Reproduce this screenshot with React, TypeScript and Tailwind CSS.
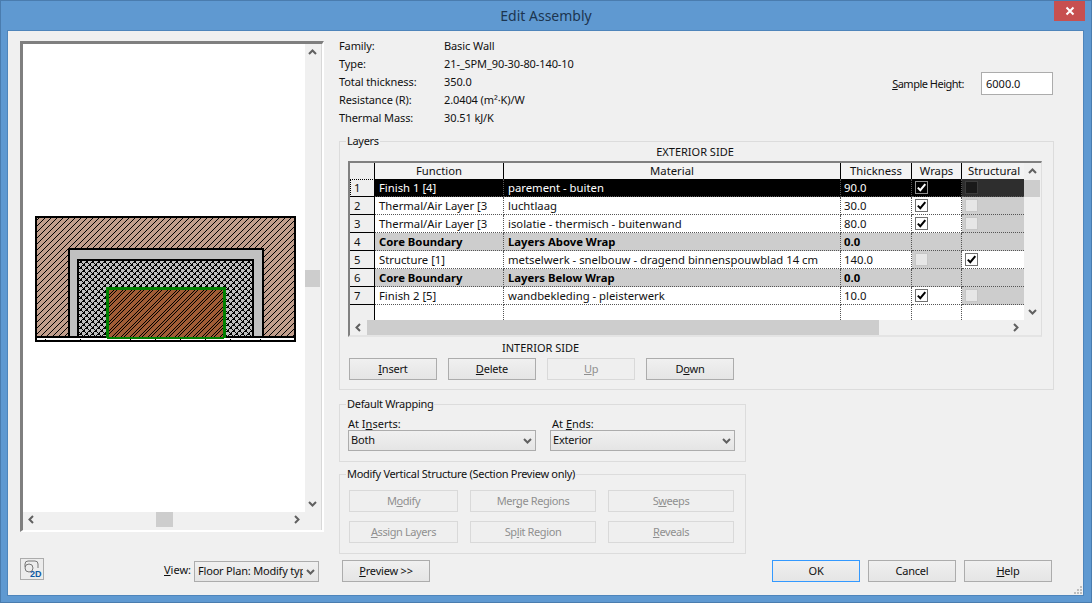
const Chevron = ({ dir, className = "" }: { dir: "up" | "down" | "left" | "right"; className?: string }) => {
  const d = {
    up: "M1 6 L4.5 2.5 L8 6",
    down: "M1 3 L4.5 6.5 L8 3",
    left: "M6 1 L2.5 4.5 L6 8",
    right: "M3 1 L6.5 4.5 L3 8",
  }[dir];
  return (
    <svg width="9" height="9" viewBox="0 0 9 9" className={className}>
      <path d={d} fill="none" stroke="#606060" strokeWidth="2" />
    </svg>
  );
};

const Check = () => (
  <svg width="11" height="11" viewBox="0 0 11 11">
    <path d="M1.8 5.6 L4.3 8.2 L9.3 2.2" fill="none" stroke="#000" strokeWidth="2" />
  </svg>
);

const CheckWhite = () => (
  <svg width="11" height="11" viewBox="0 0 11 11">
    <path d="M1.8 5.6 L4.3 8.2 L9.3 2.2" fill="none" stroke="#fff" strokeWidth="2" />
  </svg>
);

const Button = ({
  children,
  disabled,
  focus,
  className = "",
}: {
  children: React.ReactNode;
  disabled?: boolean;
  focus?: boolean;
  className?: string;
}) => (
  <div
    className={`h-[22px] flex items-center justify-center border text-[11px] ${
      disabled
        ? "border-[#d9d9d9] bg-[#efefef] text-[#8f8f8f] tracking-[-0.4px]"
        : focus
          ? "border-[#3399ff] bg-gradient-to-b from-[#f0f0f0] to-[#e5e5e5] text-[#111] tracking-[-0.2px]"
          : "border-[#acacac] bg-gradient-to-b from-[#f0f0f0] to-[#e5e5e5] text-[#111] tracking-[-0.2px]"
    } ${className}`}
  >
    <span>{children}</span>
  </div>
);

const Select = ({ value, className = "" }: { value: string; className?: string }) => (
  <div
    className={`h-[21px] flex items-center border border-[#acacac] bg-gradient-to-b from-[#f0f0f0] to-[#e5e5e5] pr-[3px] text-[11px] text-[#111] ${className}`}
  >
    <span className="flex-1 overflow-hidden whitespace-nowrap tracking-[-0.2px]">{value}</span>
    <Chevron dir="down" className="ml-[3px] shrink-0" />
  </div>
);

const Group = ({
  title,
  children,
  className = "",
}: {
  title: string;
  children: React.ReactNode;
  className?: string;
}) => (
  <fieldset className={`border border-[#dcdcdc] ${className}`}>
    <legend className="ml-[6px] px-[1px] text-[11px] leading-[12px] tracking-[-0.3px] text-[#111]">{title}</legend>
    {children}
  </fieldset>
);

const info = [
  ["Family:", "Basic Wall"],
  ["Type:", "21-_SPM_90-30-80-140-10"],
  ["Total thickness:", "350.0"],
  ["Resistance (R):", "2.0404 (m²·K)/W"],
  ["Thermal Mass:", "30.51 kJ/K"],
];

type Box = "on" | "off" | "none" | "onDark" | "offDark";

const rows: {
  n: string;
  fn: string;
  mat: string;
  th: string;
  wraps: Box;
  struct: Box;
  kind: "sel" | "core" | "plain";
}[] = [
  { n: "1", fn: "Finish 1 [4]", mat: "parement - buiten", th: "90.0", wraps: "onDark", struct: "offDark", kind: "sel" },
  { n: "2", fn: "Thermal/Air Layer [3", mat: "luchtlaag", th: "30.0", wraps: "on", struct: "off", kind: "plain" },
  { n: "3", fn: "Thermal/Air Layer [3", mat: "isolatie - thermisch - buitenwand", th: "80.0", wraps: "on", struct: "off", kind: "plain" },
  { n: "4", fn: "Core Boundary", mat: "Layers Above Wrap", th: "0.0", wraps: "none", struct: "none", kind: "core" },
  { n: "5", fn: "Structure [1]", mat: "metselwerk - snelbouw - dragend binnenspouwblad 14 cm", th: "140.0", wraps: "off", struct: "on", kind: "plain" },
  { n: "6", fn: "Core Boundary", mat: "Layers Below Wrap", th: "0.0", wraps: "none", struct: "none", kind: "core" },
  { n: "7", fn: "Finish 2 [5]", mat: "wandbekleding - pleisterwerk", th: "10.0", wraps: "on", struct: "off", kind: "plain" },
];

const CheckCell = ({ box, last }: { box: Box; last?: boolean }) => {
  const bg =
    box === "onDark"
      ? "bg-black"
      : box === "offDark"
        ? "bg-[#2e2e2e]"
        : box === "on"
          ? "bg-white"
          : "bg-[#cdcdcd]";
  return (
    <div
      className={`h-[18px] flex items-center pl-[3px] border-b border-dotted border-b-[#555] ${
        last ? "" : "border-r border-r-[#555]"
      } ${bg}`}
    >
      {box === "on" && (
        <div className="w-[13px] h-[13px] border border-[#707070] bg-white flex items-center justify-center">
          <Check />
        </div>
      )}
      {box === "onDark" && (
        <div className="w-[13px] h-[13px] border border-[#8f8f8f] bg-black flex items-center justify-center">
          <CheckWhite />
        </div>
      )}
      {box === "off" && <div className="w-[13px] h-[13px] border border-[#c6c6c6] bg-[#e6e6e6]" />}
      {box === "offDark" && <div className="w-[13px] h-[13px] border border-[#3c3c3c] bg-[#191919]" />}
    </div>
  );
};

const LayerTable = () => (
  <div className="w-[694px] h-[176px] border-l-2 border-t-2 border-l-[#808080] border-t-[#808080] border-r border-b-2 border-r-[#dedede] border-b-[#e4e4e4] grid grid-cols-[674px_17px] grid-rows-[157px_15px] bg-[#f0f0f0] text-[11.3px] text-[#111]">
    <div className="overflow-hidden bg-white">
      <div className="grid grid-cols-[25px_129px_337px_71px_50px_62px] h-[16px] leading-[16px] bg-[#f3f3f3] text-center">
        <div className="border-r border-black bg-[#efefef]" />
        <div className="border-r border-black">Function</div>
        <div className="border-r border-black">Material</div>
        <div className="border-r border-black">Thickness</div>
        <div className="border-r border-black">Wraps</div>
        <div className="overflow-hidden whitespace-nowrap text-left pl-[6px]">Structural</div>
      </div>
      {rows.map((r) => {
        const tone =
          r.kind === "sel"
            ? "bg-black text-white"
            : r.kind === "core"
              ? "bg-[#cdcdcd] font-bold text-black"
              : "bg-white text-[#111]";
        const cell = "h-[18px] leading-[17px] border-r border-b border-dotted border-[#555] whitespace-nowrap overflow-hidden";
        return (
          <div key={r.n} className="grid grid-cols-[25px_129px_337px_71px_50px_62px]">
            <div
              className={`h-[18px] leading-[17px] pl-[4px] bg-[#efefef] border-r border-b border-black ${
                r.kind === "sel" ? "outline-1 -outline-offset-1 outline-dotted outline-black" : ""
              }`}
            >
              {r.n}
            </div>
            <div className={`${cell} ${tone} pl-[4px]`}>{r.fn}</div>
            <div className={`${cell} ${tone} pl-[4px]`}>{r.mat}</div>
            <div className={`${cell} ${tone} pl-[3px]`}>{r.th}</div>
            <CheckCell box={r.wraps} />
            <CheckCell box={r.struct} last />
          </div>
        );
      })}
      <div className="grid grid-cols-[25px_129px_337px_71px_50px_62px] h-[15px]">
        <div className="bg-[#efefef] border-r border-black" />
        <div className="border-r border-dotted border-[#555]" />
        <div className="border-r border-dotted border-[#555]" />
        <div className="border-r border-dotted border-[#555]" />
        <div className="border-r border-dotted border-[#555]" />
        <div />
      </div>
    </div>
    <div className="flex flex-col items-center">
      <div className="h-[17px] flex items-center justify-center">
        <Chevron dir="up" />
      </div>
      <div className="w-[16px] h-[17px] bg-[#cdcdcd] self-start" />
      <div className="flex-1" />
      <div className="h-[17px] flex items-center justify-center">
        <Chevron dir="down" />
      </div>
    </div>
    <div className="flex items-center">
      <div className="w-[17px] flex justify-center">
        <Chevron dir="left" />
      </div>
      <div className="w-[512px] h-[15px] bg-[#cdcdcd]" />
      <div className="flex-1" />
      <div className="w-[17px] flex justify-center">
        <Chevron dir="right" />
      </div>
    </div>
    <div />
  </div>
);

// one pixel per step so the hatch stays a thin staircase
const px = (pts: number[][]) => pts.map(([x, y]) => `M${x} ${y}h1v1h-1z`).join(" ");

const WallDrawing = () => (
  <svg width="262" height="127" viewBox="0 0 262 127" shapeRendering="crispEdges" className="block">
    <defs>
      <pattern id="hatch" width="6" height="6" patternUnits="userSpaceOnUse">
        <rect width="6" height="6" fill="#c19e8c" />
        <path d={px([[0, 5], [1, 4], [2, 3], [3, 2], [4, 1], [5, 0]])} fill="#000" />
      </pattern>
      <pattern id="brick" width="9" height="9" patternUnits="userSpaceOnUse">
        <rect width="9" height="9" fill="#a05c36" />
        <path
          d={px([[0, 8], [1, 7], [2, 6], [3, 5], [4, 4], [5, 3], [6, 2], [7, 1], [8, 0], [0, 2], [1, 1], [2, 0], [3, 8], [4, 7], [5, 6], [6, 5], [7, 4], [8, 3]])}
          fill="#000"
        />
      </pattern>
      <pattern id="cross" width="6" height="6" patternUnits="userSpaceOnUse">
        <rect width="6" height="6" fill="#c0c0c0" />
        <path d={px([[0, 0], [1, 0], [0, 1], [1, 1], [3, 3], [4, 3], [3, 4], [4, 4], [2, 2], [5, 5], [2, 4], [4, 2], [1, 5], [5, 1]])} fill="#000" />
      </pattern>
    </defs>
    <rect x="1" y="1" width="259" height="120" fill="url(#hatch)" stroke="#000" strokeWidth="2" />
    <path d="M34 121 V33 H228 V121 Z" fill="#c0c0c0" stroke="#000" strokeWidth="2" />
    <path d="M43 121 V44 H218 V121 Z" fill="url(#cross)" stroke="#000" strokeWidth="2" />
    <rect x="72" y="72" width="117" height="50" fill="url(#brick)" stroke="#008000" strokeWidth="3" />
    <rect x="2" y="122" width="258" height="2" fill="#fff" />
    <rect x="72" y="121" width="117" height="2" fill="#008000" />
    <rect x="0" y="120" width="2" height="6" fill="#000" />
    <rect x="259" y="120" width="2" height="6" fill="#000" />
    <rect x="0" y="124" width="261" height="2" fill="#000" />
    <path d="M10 123 V124 M45 123 V124 M95 123 V124 M120 123 V124 M145 123 V124 M170 123 V124 M195 123 V124 M225 123 V124" stroke="#000" />
  </svg>
);

const App = () => {
  return (
    <div className="w-[1092px] h-[603px] bg-[#5f99d1] border border-[#4a7cae] font-['Noto_Sans',sans-serif] overflow-hidden">
      {/* title bar */}
      <div className="h-[29px] grid grid-cols-[1fr_auto_1fr] items-start">
        <div />
        <div className="pt-[5px] text-[14px] leading-[20px] text-[#1c3550]">Edit Assembly</div>
        <div className="flex justify-end pr-[6px]">
          <div className="w-[31px] h-[20px] bg-[#c75050] flex items-center justify-center">
            <svg width="10" height="10" viewBox="0 0 10 10">
              <path d="M1.5 1.5 L8.5 8.5 M8.5 1.5 L1.5 8.5" stroke="#fff" strokeWidth="2" />
            </svg>
          </div>
        </div>
      </div>

      {/* dialog */}
      <div className="relative ml-[6px] w-[1077px] h-[566px] border border-[#4e85bb] bg-[#f0f0f0] flex text-[11px] text-[#111]">
        {/* left column */}
        <div className="w-[304px] ml-[12px] pt-[10px] flex flex-col">
          <div className="h-[491px] border-l-[3px] border-t-[3px] border-l-[#7f7f7f] border-t-[#7f7f7f] border-r-2 border-b-2 border-r-white border-b-white grid grid-cols-[282px_1fr] grid-rows-[468px_1fr]">
            <div className="bg-white pl-[12px] pt-[172px]">
              <WallDrawing />
            </div>
            <div className="flex flex-col justify-between items-start border-r border-[#d8d8d8]">
              <div className="w-[15px] h-[17px] flex items-center justify-center">
                <Chevron dir="up" />
              </div>
              <div className="w-[15px] h-[17px] bg-[#cdcdcd]" />
              <div className="w-[15px] h-[17px] flex items-center justify-center">
                <Chevron dir="down" />
              </div>
            </div>
            <div className="h-[15px] flex justify-between items-center">
              <div className="w-[17px] flex justify-center">
                <Chevron dir="left" />
              </div>
              <div className="w-[17px] h-[15px] bg-[#cdcdcd]" />
              <div className="w-[17px] flex justify-center">
                <Chevron dir="right" />
              </div>
            </div>
            <div className="border-r border-[#d8d8d8]" />
          </div>
          <div className="mt-[26px] flex items-start">
            <div className="w-[24px] h-[22px] border border-[#acacac] bg-[#ececec]">
              <svg width="22" height="20" viewBox="0 0 22 20" className="block">
                <path d="M4 8 V5 Q4 2 7 2 H14 Q17 2 17 5 V9" fill="none" stroke="#777" strokeWidth="1" />
                <circle cx="8" cy="9" r="4" fill="none" stroke="#777" strokeWidth="1" />
                <text x="9" y="18" fontSize="9" fontWeight="700" fill="#0f5aa5" fontFamily="'Liberation Sans',sans-serif">
                  2D
                </text>
              </svg>
            </div>
            <span className="ml-[120px] mt-[5px] leading-[13px]">
              <u>V</u>iew:
            </span>
            <Select value="Floor Plan: Modify type" className="ml-[3px] mt-[3px] w-[125px] pl-[3px]" />
          </div>
        </div>

        {/* right column */}
        <div className="ml-[15px] w-[715px] flex flex-col">
          <div className="pt-[6px] flex justify-between h-[96px]">
            <div className="tracking-[-0.1px]">
              {info.map(([k, v]) => (
                <div key={k} className="h-[18px] leading-[18px] flex">
                  <span className="w-[105px]">{k}</span>
                  <span>{v}</span>
                </div>
              ))}
            </div>
            <div className="flex items-start mt-[35px] mr-[1px]">
              <span className="mt-[5px] mr-[17px] leading-[13px] tracking-[-0.5px]">
                <u>S</u>ample Height:
              </span>
              <div className="w-[72px] h-[23px] border border-[#acacac] bg-white pl-[4px] leading-[21px]">6000.0</div>
            </div>
          </div>

          <Group title="Layers" className="mt-[8px] h-[255px]">
            <div className="pl-[8px] pr-[11px] -mt-[2px]">
              <div className="h-[16px] leading-[13px] text-center">EXTERIOR SIDE</div>
              <LayerTable />
              <div className="mt-[4px] ml-[154px] h-[13px] leading-[13px] whitespace-nowrap">INTERIOR SIDE</div>
              <div className="mt-[4px] ml-[1px] flex gap-[11px]">
                <Button className="w-[88px]">
                  <u>I</u>nsert
                </Button>
                <Button className="w-[88px]">
                  <u>D</u>elete
                </Button>
                <Button disabled className="w-[88px]">
                  <u>U</u>p
                </Button>
                <Button className="w-[88px]">
                  D<u>o</u>wn
                </Button>
              </div>
            </div>
          </Group>

          <Group title="Default Wrapping" className="mt-[8px] w-[407px] h-[64px]">
            <div className="mt-[7px] pl-[8px] flex">
              <div className="w-[188px] mr-[14px]">
                <div className="h-[13px] leading-[13px]">
                  At I<u>n</u>serts:
                </div>
                <Select value="Both" className="pl-[2px]" />
              </div>
              <div className="w-[185px]">
                <div className="h-[13px] leading-[13px] pl-[2px]">
                  At <u>E</u>nds:
                </div>
                <Select value="Exterior" className="pl-[2px]" />
              </div>
            </div>
          </Group>

          <Group title="Modify Vertical Structure (Section Preview only)" className="mt-[6px] w-[407px] h-[86px]">
            <div className="mt-[10px] pl-[9px] grid grid-cols-[109px_126px_126px] gap-x-[12px] gap-y-[9px]">
              <Button disabled>
                M<u>o</u>dify
              </Button>
              <Button disabled>
                Mer<u>g</u>e Regions
              </Button>
              <Button disabled>
                S<u>w</u>eeps
              </Button>
              <Button disabled>
                <u>A</u>ssign Layers
              </Button>
              <Button disabled>
                Sp<u>l</u>it Region
              </Button>
              <Button disabled>
                <u>R</u>eveals
              </Button>
            </div>
          </Group>

          <div className="mt-[6px] ml-[3px] flex">
            <Button className="w-[88px]">
              <u>P</u>review &gt;&gt;
            </Button>
            <div className="ml-auto mr-[2px] flex gap-[8px]">
              <Button focus className="w-[88px]">
                OK
              </Button>
              <Button className="w-[88px]">Cancel</Button>
              <Button className="w-[88px]">
                <u>H</u>elp
              </Button>
            </div>
          </div>
        </div>

        {/* size grip */}
        <svg width="9" height="9" viewBox="0 0 9 9" className="absolute right-[1px] bottom-[1px]">
          <path d="M7 1h2v2h-2z M4 4h2v2h-2z M7 4h2v2h-2z M1 7h2v2h-2z M4 7h2v2h-2z M7 7h2v2h-2z" fill="#bdbdbd" />
        </svg>
      </div>
    </div>
  );
};

export default App;
